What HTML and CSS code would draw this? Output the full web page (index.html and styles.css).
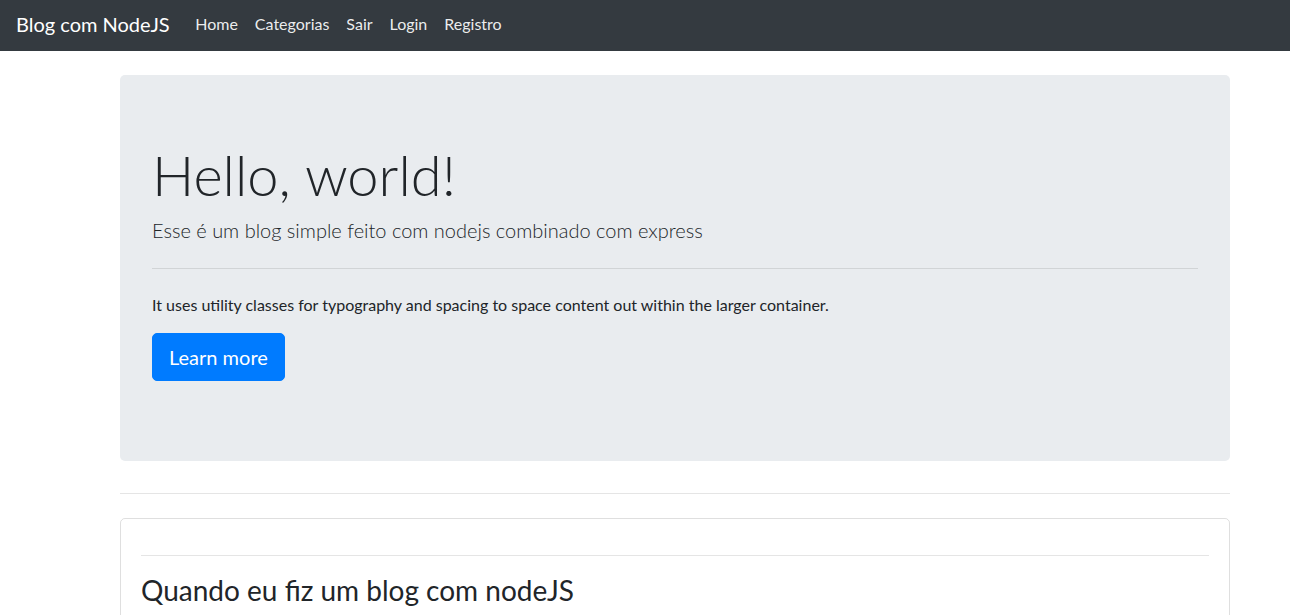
FILE: index.html
```html
<!DOCTYPE html>
<html lang="pt">
<head>
<meta charset="utf-8">
<title>Blog com NodeJS</title>
<link rel="stylesheet" href="styles.css">
</head>
<body>
<nav class="navbar">
  <a class="brand" href="#">Blog com NodeJS</a>
  <ul class="nav">
    <li><a class="nav-link" href="#">Home</a></li>
    <li><a class="nav-link" href="#">Categorias</a></li>
    <li><a class="nav-link" href="#">Sair</a></li>
    <li><a class="nav-link" href="#">Login</a></li>
    <li><a class="nav-link" href="#">Registro</a></li>
  </ul>
</nav>
<main class="container">
  <section class="jumbotron">
    <h1 class="display">Hello, world!</h1>
    <p class="lead">Esse é um blog simple feito com nodejs combinado com express</p>
    <hr class="jumbo-hr">
    <p class="text">It uses utility classes for typography and spacing to space content out within the larger container.</p>
    <p class="lead btn-wrap"><a class="btn" href="#">Learn more</a></p>
  </section>
  <hr class="sep">
  <article class="card">
    <div class="card-body">
      <hr class="card-hr">
      <h3 class="card-title">Quando eu fiz um blog com nodeJS</h3>
    </div>
  </article>
</main>
</body>
</html>
```
FILE: styles.css
```css
* { box-sizing: border-box; }
html, body { margin: 0; padding: 0; }
body {
  font-family: Lato, "Liberation Sans", sans-serif;
  font-size: 16px;
  line-height: 1.5;
  color: #212529;
  background: #fff;
  overflow: hidden;
}
a { text-decoration: none; }
.navbar {
  display: flex;
  align-items: center;
  height: 51px;
  padding: 0 16px 4px;
  background: #343a40;
}
.brand {
  font-size: 20px;
  color: #fff;
  margin-right: 17px;
  line-height: 30px;
}
.nav {
  display: flex;
  list-style: none;
  margin: 0;
  padding: 0;
}
.nav-link {
  display: block;
  padding: 8px 8.5px;
  color: rgba(255,255,255,0.92);
}
.container {
  width: 1110px;
  margin-left: 120px;
  padding-top: 24px;
}
.jumbotron {
  background: #e9ecef;
  border-radius: 5px;
  padding: 64px 32px;
  margin-bottom: 32px;
}
.display {
  font-size: 56px;
  font-weight: 300;
  line-height: 1.2;
  padding-top: 2px;
  margin: 0 0 7px;
}
.lead {
  font-size: 20px;
  font-weight: 300;
  margin: 0 0 16px;
}
.jumbo-hr {
  border: 0;
  border-top: 1px solid rgba(0,0,0,0.1);
  margin: 23px 0 24px;
}
.text { margin: 0 0 16px; }
.btn-wrap { margin: 0; line-height: 1; }
.btn {
  display: inline-block;
  background: #007bff;
  border: 1px solid #007bff;
  color: #fff;
  font-size: 20px;
  font-weight: 400;
  line-height: 30px;
  padding: 8px 16px;
  border-radius: 5px;
  vertical-align: top;
}
.jumbotron .btn-wrap { padding-bottom: 16px; }
.sep {
  border: 0;
  border-top: 1px solid rgba(0,0,0,0.1);
  margin: 0 0 24px;
}
.card {
  border: 1px solid rgba(0,0,0,0.125);
  border-radius: 5px;
  min-height: 200px;
}
.card-body { padding: 20px; }
.card-hr {
  border: 0;
  border-top: 1px solid rgba(0,0,0,0.1);
  margin: 16px 0;
}
.card-title {
  font-size: 28px;
  font-weight: 400;
  line-height: 1.2;
  padding-top: 2px;
  margin: 0 0 12px;
}
```
